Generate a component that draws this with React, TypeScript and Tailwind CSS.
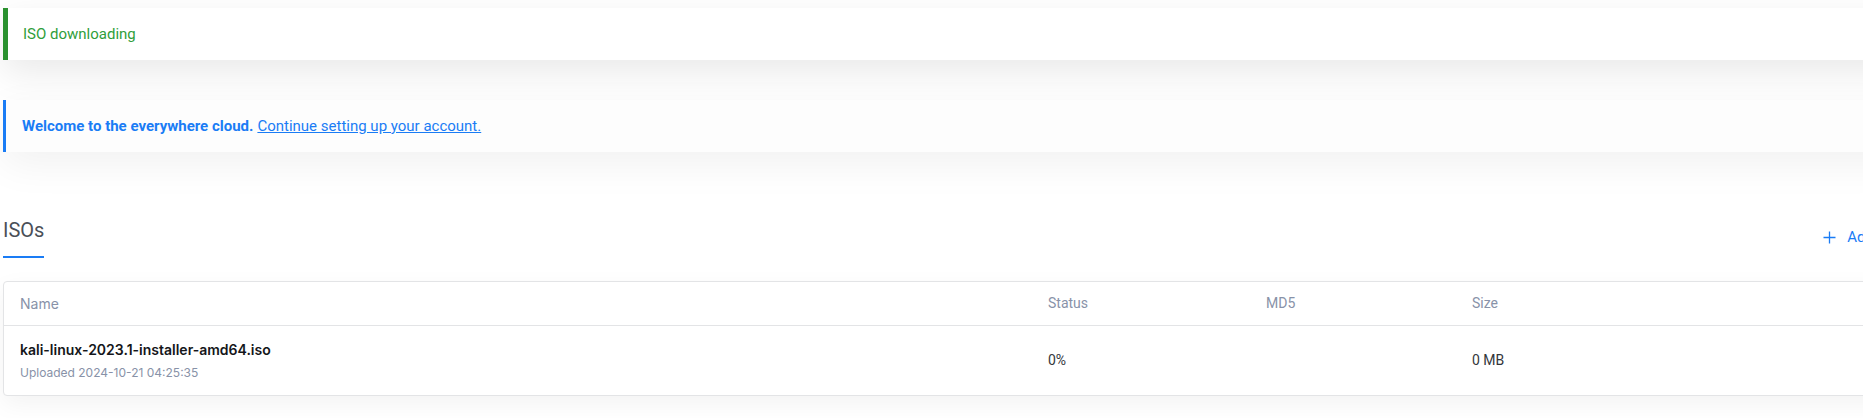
import React from "react";

export default function App() {
  return (
    <div className="w-[1863px] h-[418px] overflow-hidden bg-white" style={{ fontFamily: "Roboto, 'Noto Sans', sans-serif" }}>
      <div className="w-[1906px] ml-[3px] pt-[8px] flex flex-col">
        <div className="h-[52px] bg-white border-l-[5px] border-[#2a912f] flex items-center pl-[15px] shadow-[0_12px_36px_rgba(0,0,0,0.09)] text-[15px] text-[#2f9e3a]">
          ISO downloading
        </div>
        <div className="mt-[40px] h-[52px] bg-[#fdfdfd] border-l-[3px] border-[#1a7cf5] flex items-center pl-[16px] shadow-[0_12px_40px_rgba(0,0,0,0.06)] text-[15px] text-[#1a7cf5]">
          <span className="font-bold">Welcome to the everywhere cloud.</span>
          <a className="ml-[4px] underline" href="#">Continue setting up your account.</a>
        </div>
        <div className="mt-[60px] flex items-start justify-between">
          <div className="flex flex-col">
            <div className="text-[20px] leading-[28px] text-[#4a4f57] pt-[4px]">ISOs</div>
            <div className="mt-[12px] h-[2px] w-[41px] bg-[#1a7cf5]"></div>
          </div>
          <button className="mt-[14px] flex items-center gap-[11px] pr-[8px] text-[15px] text-[#1a7cf5]">
            <svg width="13" height="13" viewBox="0 0 13 13" fill="none" stroke="#1a7cf5" strokeWidth="1.3">
              <path d="M6.5 0.5v12M0.5 6.5h12" />
            </svg>
            <span>Add ISO</span>
          </button>
        </div>
        <div className="mt-[23px] border border-[#e3e4e6] rounded-[4px] bg-white shadow-[0_8px_24px_rgba(0,0,0,0.05)]" style={{ fontFamily: "Inter, Roboto, sans-serif" }}>
          <div className="h-[44px] grid grid-cols-[1028px_218px_206px_1fr] items-center px-[16px] border-b border-[#e3e4e6] text-[14px] text-[#8892a8]">
            <div>Name</div>
            <div style={{ fontFamily: "Roboto, sans-serif" }}>Status</div>
            <div style={{ fontFamily: "Roboto, sans-serif" }}>MD5</div>
            <div style={{ fontFamily: "Roboto, sans-serif" }}>Size</div>
          </div>
          <div className="h-[69px] grid grid-cols-[1028px_218px_206px_1fr] items-center px-[16px] text-[14px] text-[#33363b]">
            <div className="flex flex-col gap-[6px]">
              <div className="font-semibold text-[#14161a] leading-[18px]">kali-linux-2023.1-installer-amd64.iso</div>
              <div className="text-[12px] text-[#8892a8] leading-[16px]">Uploaded 2024-10-21 04:25:35</div>
            </div>
            <div style={{ fontFamily: "Roboto, sans-serif" }}>0%</div>
            <div></div>
            <div style={{ fontFamily: "Roboto, sans-serif" }}>0 MB</div>
          </div>
        </div>
      </div>
    </div>
  );
}
